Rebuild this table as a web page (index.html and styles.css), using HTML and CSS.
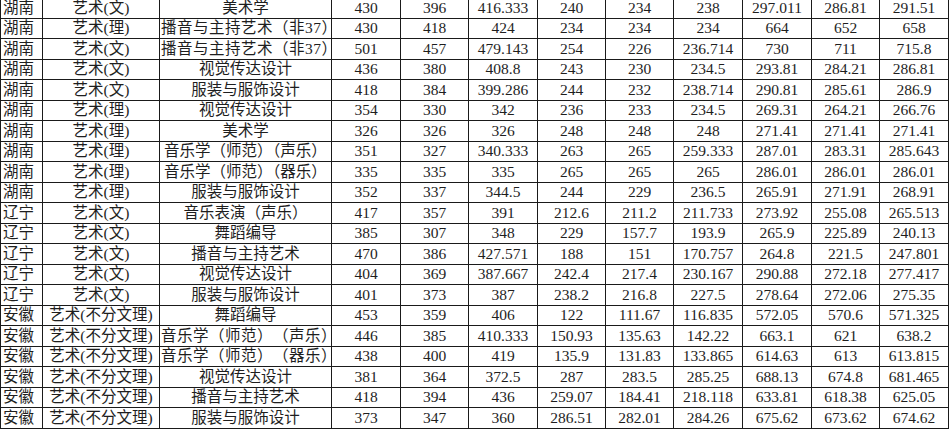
FILE: index.html
```html
<!DOCTYPE html>
<html lang="zh">
<head>
<meta charset="utf-8">
<link rel="stylesheet" href="styles.css">
</head>
<body>
<table class="grid">
<colgroup>
<col class="c-prov"><col class="c-cat"><col class="c-major">
<col class="c-n1"><col class="c-n2"><col class="c-n1"><col class="c-n2"><col class="c-n2"><col class="c-n1"><col class="c-n1"><col class="c-n2"><col class="c-n1">
</colgroup>
<tbody>
<tr class="cut"><td>湖南</td><td>艺术(文)</td><td>美术学</td><td>430</td><td>396</td><td>416.333</td><td>240</td><td>234</td><td>238</td><td>297.011</td><td>286.81</td><td>291.51</td></tr>
<tr><td>湖南</td><td>艺术(理)</td><td class="left">播音与主持艺术（非37）</td><td>430</td><td>418</td><td>424</td><td>234</td><td>234</td><td>234</td><td>664</td><td>652</td><td>658</td></tr>
<tr><td>湖南</td><td>艺术(文)</td><td class="left">播音与主持艺术（非37）</td><td>501</td><td>457</td><td>479.143</td><td>254</td><td>226</td><td>236.714</td><td>730</td><td>711</td><td>715.8</td></tr>
<tr><td>湖南</td><td>艺术(文)</td><td>视觉传达设计</td><td>436</td><td>380</td><td>408.8</td><td>243</td><td>230</td><td>234.5</td><td>293.81</td><td>284.21</td><td>286.81</td></tr>
<tr><td>湖南</td><td>艺术(文)</td><td>服装与服饰设计</td><td>418</td><td>384</td><td>399.286</td><td>244</td><td>232</td><td>238.714</td><td>290.81</td><td>285.61</td><td>286.9</td></tr>
<tr><td>湖南</td><td>艺术(理)</td><td>视觉传达设计</td><td>354</td><td>330</td><td>342</td><td>236</td><td>233</td><td>234.5</td><td>269.31</td><td>264.21</td><td>266.76</td></tr>
<tr><td>湖南</td><td>艺术(理)</td><td>美术学</td><td>326</td><td>326</td><td>326</td><td>248</td><td>248</td><td>248</td><td>271.41</td><td>271.41</td><td>271.41</td></tr>
<tr><td>湖南</td><td>艺术(理)</td><td class="tight">音乐学（师范）（声乐）</td><td>351</td><td>327</td><td>340.333</td><td>263</td><td>265</td><td>259.333</td><td>287.01</td><td>283.31</td><td>285.643</td></tr>
<tr><td>湖南</td><td>艺术(理)</td><td class="tight">音乐学（师范）（器乐）</td><td>335</td><td>335</td><td>335</td><td>265</td><td>265</td><td>265</td><td>286.01</td><td>286.01</td><td>286.01</td></tr>
<tr><td>湖南</td><td>艺术(理)</td><td>服装与服饰设计</td><td>352</td><td>337</td><td>344.5</td><td>244</td><td>229</td><td>236.5</td><td>265.91</td><td>271.91</td><td>268.91</td></tr>
<tr><td>辽宁</td><td>艺术(文)</td><td>音乐表演（声乐）</td><td>417</td><td>357</td><td>391</td><td>212.6</td><td>211.2</td><td>211.733</td><td>273.92</td><td>255.08</td><td>265.513</td></tr>
<tr><td>辽宁</td><td>艺术(文)</td><td>舞蹈编导</td><td>385</td><td>307</td><td>348</td><td>229</td><td>157.7</td><td>193.9</td><td>265.9</td><td>225.89</td><td>240.13</td></tr>
<tr><td>辽宁</td><td>艺术(文)</td><td>播音与主持艺术</td><td>470</td><td>386</td><td>427.571</td><td>188</td><td>151</td><td>170.757</td><td>264.8</td><td>221.5</td><td>247.801</td></tr>
<tr><td>辽宁</td><td>艺术(文)</td><td>视觉传达设计</td><td>404</td><td>369</td><td>387.667</td><td>242.4</td><td>217.4</td><td>230.167</td><td>290.88</td><td>272.18</td><td>277.417</td></tr>
<tr><td>辽宁</td><td>艺术(文)</td><td>服装与服饰设计</td><td>401</td><td>373</td><td>387</td><td>238.2</td><td>216.8</td><td>227.5</td><td>278.64</td><td>272.06</td><td>275.35</td></tr>
<tr><td>安徽</td><td>艺术(不分文理)</td><td>舞蹈编导</td><td>453</td><td>359</td><td>406</td><td>122</td><td>111.67</td><td>116.835</td><td>572.05</td><td>570.6</td><td>571.325</td></tr>
<tr><td>安徽</td><td>艺术(不分文理)</td><td class="left">音乐学（师范）（声乐）</td><td>446</td><td>385</td><td>410.333</td><td>150.93</td><td>135.63</td><td>142.22</td><td>663.1</td><td>621</td><td>638.2</td></tr>
<tr><td>安徽</td><td>艺术(不分文理)</td><td class="left">音乐学（师范）（器乐）</td><td>438</td><td>400</td><td>419</td><td>135.9</td><td>131.83</td><td>133.865</td><td>614.63</td><td>613</td><td>613.815</td></tr>
<tr><td>安徽</td><td>艺术(不分文理)</td><td>视觉传达设计</td><td>381</td><td>364</td><td>372.5</td><td>287</td><td>283.5</td><td>285.25</td><td>688.13</td><td>674.8</td><td>681.465</td></tr>
<tr><td>安徽</td><td>艺术(不分文理)</td><td>播音与主持艺术</td><td>418</td><td>394</td><td>436</td><td>259.07</td><td>184.41</td><td>218.118</td><td>633.81</td><td>618.38</td><td>625.05</td></tr>
<tr><td>安徽</td><td>艺术(不分文理)</td><td>服装与服饰设计</td><td>373</td><td>347</td><td>360</td><td>286.51</td><td>282.01</td><td>284.26</td><td>675.62</td><td>673.62</td><td>674.62</td></tr>
</tbody>
</table>
</body>
</html>
```
FILE: styles.css
```css
html, body {
  margin: 0;
  padding: 0;
  background: #ffffff;
}

.grid {
  border-collapse: collapse;
  table-layout: fixed;
  width: 949px;
  font-family: "Liberation Serif", "Noto Sans CJK SC", serif;
  font-size: 15.5px;
  color: #1e1e1e;
  text-spacing-trim: space-all;
}

.c-prov { width: 42px; }
.c-cat { width: 117px; }
.c-major { width: 172px; }
.c-n1 { width: 69px; }
.c-n2 { width: 68px; }

.grid td {
  border: 1px solid #1a1a1a;
  padding: 0;
  height: 19.5px;
  line-height: 18px;
  text-align: center;
  white-space: nowrap;
  overflow: hidden;
  vertical-align: middle;
}

.grid tr.cut td {
  border-top: none;
  height: 17.5px;
  line-height: 15px;
  vertical-align: top;
}

.grid td.left {
  text-align: left;
  padding-left: 1px;
  letter-spacing: 0.5px;
}

.grid td.tight {
  text-spacing-trim: normal;
}

.grid td:first-child {
  text-align: left;
  padding-left: 2px;
}
```
